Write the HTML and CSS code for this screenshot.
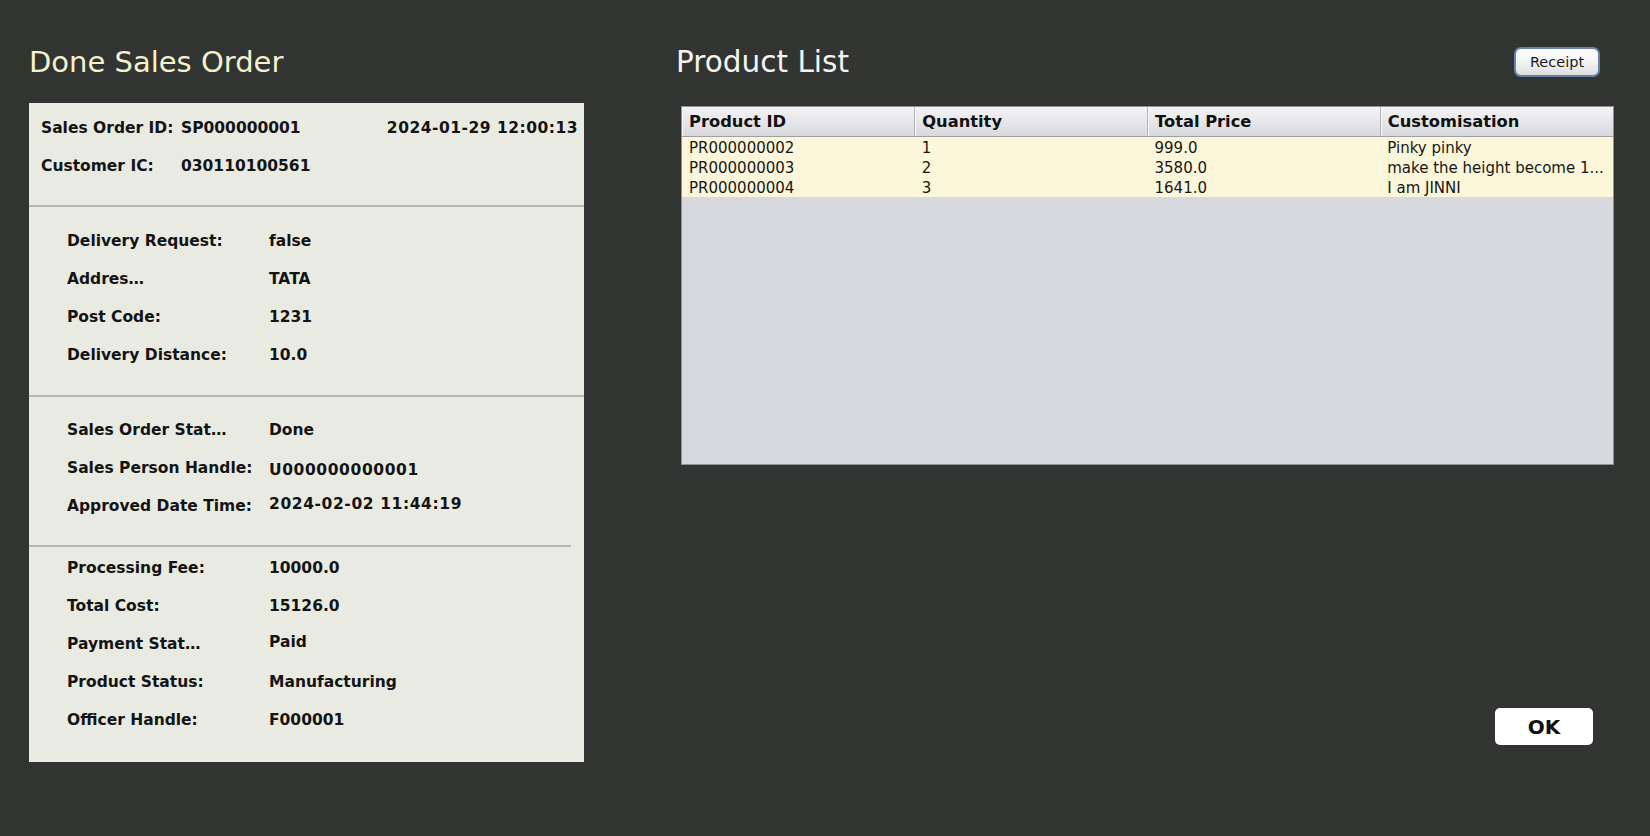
FILE: index.html
```html
<!DOCTYPE html>
<html lang="en">
<head>
<meta charset="utf-8">
<title>Done Sales Order</title>
<link rel="stylesheet" href="styles.css">
</head>
<body>
<main class="window">
  <div class="left">
    <h1 class="title title-cream">Done Sales Order</h1>
    <section class="panel">
      <div class="sec sec-head">
        <div class="head-row">
          <span class="hl">Sales Order ID:</span>
          <span class="hv">SP000000001</span>
          <span class="hdate">2024-01-29 12:00:13</span>
        </div>
        <div class="head-row">
          <span class="hl">Customer IC:</span>
          <span class="hv">030110100561</span>
        </div>
      </div>
      <div class="rule"></div>
      <div class="sec sec-delivery">
        <span class="lbl">Delivery Request:</span><span class="val">false</span>
        <span class="lbl">Addres…</span><span class="val">TATA</span>
        <span class="lbl">Post Code:</span><span class="val">1231</span>
        <span class="lbl">Delivery Distance:</span><span class="val">10.0</span>
      </div>
      <div class="rule"></div>
      <div class="sec sec-status">
        <span class="lbl">Sales Order Stat…</span><span class="val">Done</span>
        <span class="lbl">Sales Person Handle:</span><span class="val val-low val-wide">U000000000001</span>
        <span class="lbl">Approved Date Time:</span><span class="val val-high val-wide">2024-02-02 11:44:19</span>
      </div>
      <div class="rule rule-short"></div>
      <div class="sec sec-cost">
        <span class="lbl">Processing Fee:</span><span class="val">10000.0</span>
        <span class="lbl">Total Cost:</span><span class="val">15126.0</span>
        <span class="lbl">Payment Stat…</span><span class="val val-high">Paid</span>
        <span class="lbl">Product Status:</span><span class="val">Manufacturing</span>
        <span class="lbl">Officer Handle:</span><span class="val">F000001</span>
      </div>
    </section>
  </div>

  <div class="right">
    <div class="title-row">
      <h1 class="title title-white">Product List</h1>
      <button class="btn-receipt" type="button">Receipt</button>
    </div>
    <div class="table-box">
      <table class="grid">
        <thead>
          <tr>
            <th>Product ID</th>
            <th>Quantity</th>
            <th>Total Price</th>
            <th>Customisation</th>
          </tr>
        </thead>
        <tbody>
          <tr><td>PR000000002</td><td>1</td><td>999.0</td><td>Pinky pinky</td></tr>
          <tr><td>PR000000003</td><td>2</td><td>3580.0</td><td>make the height become 1...</td></tr>
          <tr><td>PR000000004</td><td>3</td><td>1641.0</td><td>I am JINNI</td></tr>
        </tbody>
      </table>
    </div>
    <div class="ok-row">
      <button class="btn-ok" type="button">OK</button>
    </div>
  </div>
</main>
</body>
</html>
```

FILE: styles.css
```css
html, body {
  margin: 0;
  padding: 0;
  background: #323431;
  height: 100%;
}

body {
  font-family: "DejaVu Sans", "Liberation Sans", sans-serif;
  color: #141414;
  overflow: hidden;
}

.window {
  display: flex;
  align-items: flex-start;
  padding-top: 44px;
  padding-left: 29px;
  gap: 92px;
}

.left {
  width: 555px;
  display: flex;
  flex-direction: column;
}

.title {
  margin: 0;
  font-weight: normal;
  font-size: 29px;
  line-height: 36px;
  height: 36px;
  white-space: nowrap;
}

.title-cream {
  color: #f4f1cf;
}

.title-white {
  color: #f3f3f3;
  font-size: 29.5px;
}

.panel {
  margin-top: 23px;
  background: #e9ebe3;
  display: flex;
  flex-direction: column;
  font-size: 15.5px;
  font-weight: bold;
  padding-bottom: 23px;
}

.rule {
  height: 2px;
  background: #b5b8b7;
}

.rule-short {
  margin-right: 13px;
}

.sec-head {
  padding: 6px 6px 20px 12px;
}

.head-row {
  display: grid;
  grid-template-columns: 140px auto 1fr;
  height: 38px;
  line-height: 38px;
  white-space: nowrap;
}

.hdate {
  text-align: right;
  letter-spacing: 0.5px;
}

.sec-delivery,
.sec-status,
.sec-cost {
  display: grid;
  grid-template-columns: 202px 1fr;
  grid-auto-rows: 38px;
  line-height: 38px;
  padding-left: 38px;
  white-space: nowrap;
}

.sec-delivery {
  padding-top: 15px;
  padding-bottom: 21px;
}

.sec-status {
  padding-top: 14px;
  padding-bottom: 20px;
}

.sec-cost {
  padding-top: 2px;
}

.val-low {
  position: relative;
  top: 2px;
}

.val-high {
  position: relative;
  top: -2px;
}

.val-wide {
  letter-spacing: 0.6px;
}

.right {
  width: 938px;
  display: flex;
  flex-direction: column;
}

.title-row {
  display: flex;
  align-items: center;
  justify-content: space-between;
  height: 36px;
  padding-right: 14px;
}

.btn-receipt {
  width: 86px;
  height: 30px;
  border: 2px solid #6683b0;
  border-radius: 7px;
  background: linear-gradient(#ffffff, #f3f3f3 50%, #dedede);
  font-family: "DejaVu Sans", "Liberation Sans", sans-serif;
  font-size: 14.5px;
  color: #1b1b1b;
  padding: 0;
  box-shadow: inset 0 1px 0 #ffffff;
}

.table-box {
  margin-top: 26px;
  margin-left: 5px;
  width: 933px;
  height: 359px;
  box-sizing: border-box;
  border: 1px solid #8e9094;
  background: #d8d9de;
  overflow: hidden;
}

.grid {
  width: 100%;
  border-collapse: collapse;
  table-layout: fixed;
}

.grid th {
  height: 29px;
  padding: 0 0 0 7px;
  text-align: left;
  font-size: 16.3px;
  font-weight: bold;
  line-height: 29px;
  color: #111;
  background: linear-gradient(#f4f4f6, #e4e5e8 55%, #d7d8dc);
  border-bottom: 1px solid #9fa0a5;
  border-right: 1px solid #b3b4b9;
  box-shadow: inset 1px 0 0 #f8f8fa;
  white-space: nowrap;
}

.grid th:last-child {
  border-right: none;
}

.grid td {
  height: 20px;
  padding: 2px 0 0 7px;
  box-sizing: border-box;
  font-size: 15px;
  line-height: 18px;
  color: #161616;
  background: #fcf6da;
  white-space: nowrap;
  overflow: hidden;
}

.ok-row {
  display: flex;
  justify-content: flex-end;
  margin-top: 243px;
  padding-right: 21px;
}

.btn-ok {
  width: 98px;
  height: 37px;
  border: none;
  border-radius: 5px;
  background: #ffffff;
  font-family: "DejaVu Sans", "Liberation Sans", sans-serif;
  font-size: 20px;
  font-weight: bold;
  color: #111;
  padding: 0;
}
```
